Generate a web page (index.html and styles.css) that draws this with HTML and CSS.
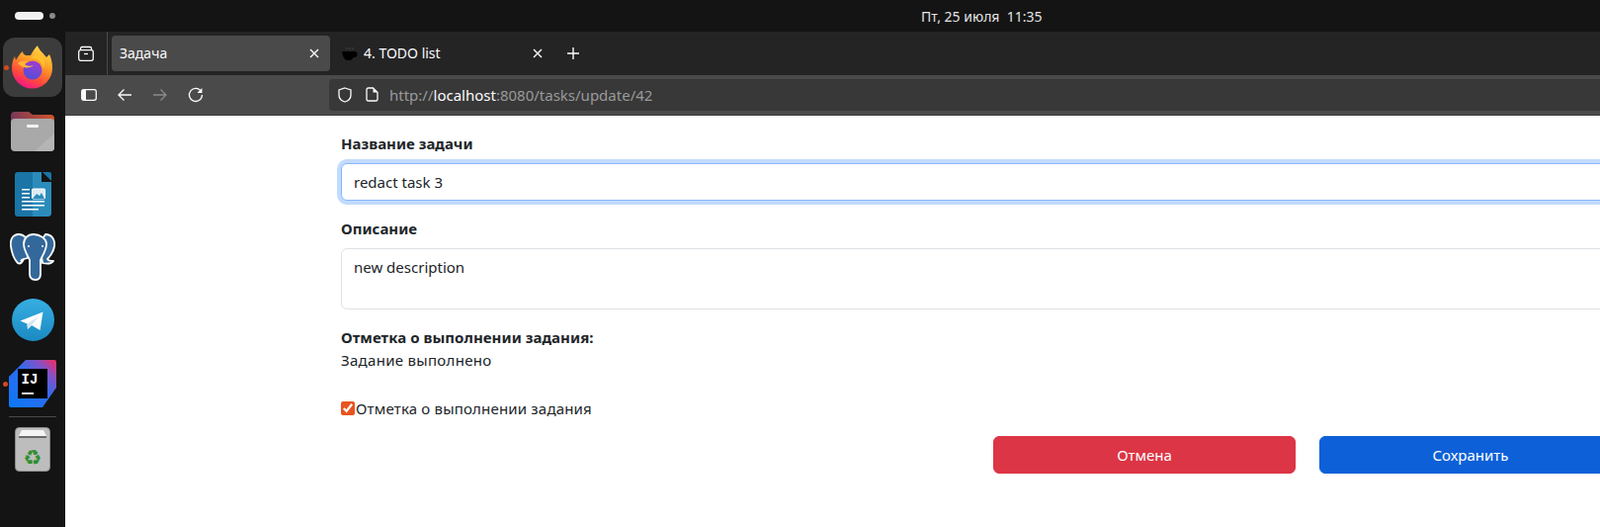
FILE: index.html
```html
<!DOCTYPE html>
<html lang="en">
    <head>
        <meta charset="UTF-8" />
        <meta name="viewport" content="width=device-width, initial-scale=1.0" />
        <title>Задача</title>
        <link rel="stylesheet" href="styles.css">
    </head>
    <body>
        <div class="topbar">
            <div class="workspaces"><span class="pill"></span><span class="dot"></span></div>
            <div class="clock">Пт, 25 июля&nbsp;&nbsp;11:35</div>
        </div>
        <div class="desktop">
            <!-- dock -->
            <aside class="dock">
                <div class="dock-item tile">
                    <span class="running"></span>
                    <svg width="46" height="46" viewBox="0 0 46 46">
                        <defs>
                            <linearGradient id="ffBody" x1="0.8" y1="0" x2="0.35" y2="1">
                                <stop offset="0" stop-color="#ffe34d"/>
                                <stop offset="0.4" stop-color="#ff9f26"/>
                                <stop offset="0.75" stop-color="#ff4a3a"/>
                                <stop offset="1" stop-color="#f5158a"/>
                            </linearGradient>
                            <linearGradient id="ffGlobe" x1="0.7" y1="0" x2="0.3" y2="1">
                                <stop offset="0" stop-color="#a43bd0"/>
                                <stop offset="1" stop-color="#4b50d8"/>
                            </linearGradient>
                        </defs>
                        <path d="M28 1C29 5 33 8 37 13L40 10C42 14 43 19 43 24A20.500 20.500 0 0 1 2 24C2 19 3 15 5 12L6 16C8 13 10 9 13 7C13 9 14 10 16 11L21 11C23 7 25 4 28 1Z" fill="url(#ffBody)"/>
                        <circle cx="23" cy="26" r="9.500" fill="url(#ffGlobe)"/>
                        <path d="M21 14C27 13 33 17 34 24C36 20 35 15 32 11C28 10 24 11 21 14Z" fill="#ffc22e"/>
                        <path d="M8 19C11 16 15 16 19 17C17 18 15 19 15 20C17 22 21 22 24 21C21 24 13 25 8 19Z" fill="#ffb43a"/>
                    </svg>
                </div>
                <div class="dock-item item-files">
                    <svg width="44" height="43" viewBox="0 0 44 43">
                        <defs>
                            <linearGradient id="folderTop" x1="0" y1="0" x2="1" y2="0">
                                <stop offset="0" stop-color="#7a3758"/>
                                <stop offset="1" stop-color="#d2552a"/>
                            </linearGradient>
                        </defs>
                        <path d="M0 6a4 4 0 0 1 4-4h14l4 3h18a4 4 0 0 1 4 4v14H0z" fill="url(#folderTop)"/>
                        <rect x="0" y="9" width="44" height="33" rx="4" fill="#a9a9a9"/>
                        <path d="M44 24v14a4 4 0 0 1-4 4H24z" fill="#b5b5b5"/>
                        <rect x="16" y="15" width="12" height="3" rx="1" fill="#f2f2f2"/>
                    </svg>
                </div>
                <div class="dock-item item-writer">
                    <svg width="37" height="45" viewBox="0 0 37 45">
                        <path d="M3 0h24v10h10v31a4 4 0 0 1-4 4H3a3 3 0 0 1-3-3V3a3 3 0 0 1 3-3z" fill="#1b75a6"/>
                        <path d="M18 0h9v10h10v31a4 4 0 0 1-4 4H18z" fill="#2b8cbc"/>
                        <path d="M28 0l9 9V2a2 2 0 0 0-2-2z" fill="#1b75a6"/>
                        <rect x="7" y="17" width="8" height="1.500" fill="#fff"/>
                        <rect x="7" y="21" width="8" height="1.500" fill="#fff"/>
                        <rect x="7" y="25" width="8" height="1.500" fill="#fff"/>
                        <rect x="7" y="29" width="23" height="1.500" fill="#fff"/>
                        <rect x="7" y="33" width="23" height="1.500" fill="#fff"/>
                        <rect x="7" y="37" width="17" height="1.500" fill="#fff"/>
                        <rect x="17.500" y="17" width="13" height="10" rx="1" fill="#dcecf5" stroke="#fff"/>
                        <path d="M18 27l4-5 3 2 2-3 3 6z" fill="#2b8cbc"/>
                    </svg>
                </div>
                <div class="dock-item item-pg">
                    <svg width="46" height="48" viewBox="0 0 46 48">
                        <g fill="#33689b" stroke="#fff" stroke-width="1.800" stroke-linejoin="round">
                            <path d="M9 1C3 1 0 6 1 13C2 20 5 27 8 30C11 32 13 28 14 26L18 25L17 5C14 2 12 1 9 1Z"/>
                            <path d="M36 1C42 1 46 6 45 13C44 19 41 23 38 26C39 28 41 28 44 28C42 31 37 31 33 30L30 10Z"/>
                            <path d="M24 1C18 1 14 5 14 11C14 17 18 22 20 27L20 41C20 46 23 47 26 47C29 47 31 45 31 41L31 27C33 22 37 17 37 11C37 5 30 1 24 1Z"/>
                        </g>
                        <path d="M14 26C11 27 10 28 13 28" fill="none" stroke="#fff" stroke-width="1.500"/>
                        <circle cx="19" cy="13" r="1" fill="#fff"/>
                        <circle cx="33" cy="13" r="1" fill="#fff"/>
                    </svg>
                </div>
                <div class="dock-item item-tg">
                    <svg width="43" height="43" viewBox="0 0 43 43">
                        <defs>
                            <linearGradient id="tgBg" x1="0.500" y1="0" x2="0.500" y2="1">
                                <stop offset="0" stop-color="#37aee2"/>
                                <stop offset="1" stop-color="#1b8ac2"/>
                            </linearGradient>
                        </defs>
                        <circle cx="21.500" cy="21.500" r="21.500" fill="url(#tgBg)"/>
                        <path d="M8.500 22.500L31.500 13.500L28.500 32L20 27L16 31L15.500 25.500Z" fill="#fff"/>
                        <path d="M15.500 25.500L16 31L20 27L27 18Z" fill="#d3e7f3"/>
                    </svg>
                </div>
                <div class="dock-item item-ij">
                    <span class="running"></span>
                    <svg width="48" height="48" viewBox="0 0 48 48">
                        <defs>
                            <linearGradient id="ijBg" x1="0" y1="1" x2="1" y2="0">
                                <stop offset="0" stop-color="#0a78f5"/>
                                <stop offset="0.55" stop-color="#2f6cf0"/>
                                <stop offset="0.8" stop-color="#8a4fc0"/>
                                <stop offset="1" stop-color="#fe2857"/>
                            </linearGradient>
                        </defs>
                        <path d="M17 0h29a2 2 0 0 1 2 2v26L34 48H2a2 2 0 0 1-2-2V17z" fill="url(#ijBg)"/>
                        <rect x="9" y="9" width="30" height="30" fill="#000"/>
                        <text x="12.500" y="24" class="ij-text">IJ</text>
                        <rect x="13" y="33" width="12" height="1.800" fill="#fff"/>
                    </svg>
                </div>
                <div class="dock-sep"></div>
                <div class="dock-item item-trash">
                    <svg width="36" height="45" viewBox="0 0 36 45">
                        <rect x="0.500" y="0.500" width="35" height="44" rx="4" fill="#bdbdbd" stroke="#8a8a8a"/>
                        <path d="M4 9l3-6h22l3 6z" fill="#f4f4f4"/>
                        <rect x="4" y="9" width="28" height="2" fill="#6b6b6b"/>
                        <text x="18" y="38" class="recycle">♻</text>
                    </svg>
                </div>
            </aside>

            <div class="browser">
                <div class="tabbar">
                    <div class="tabs-btn">
                        <svg width="16" height="16" viewBox="0 0 16 16" fill="none" stroke="#fbfbfe" stroke-width="1.300">
                            <rect x="0.700" y="4.700" width="14.600" height="10.600" rx="2"/>
                            <path d="M2.500 4.500V3a1.500 1.500 0 0 1 1.500-1.500h8A1.500 1.500 0 0 1 13.500 3v1.500"/>
                            <path d="M6 8.500h4"/>
                        </svg>
                    </div>
                    <div class="tab active">
                        <span class="tab-title">Задача</span>
                        <svg class="tab-close" width="10" height="10" viewBox="0 0 10 10" stroke="#fbfbfe" stroke-width="1.400"><path d="M1 1l8 8M9 1l-8 8"/></svg>
                    </div>
                    <div class="tab">
                        <svg class="favicon" width="16" height="16" viewBox="0 0 16 16">
                            <path d="M0 6h12.500a3 3 0 0 1 0 6h-1c-1 2-2 3-4 3h-2C3 15 1 12 0 6z" fill="#000"/>
                            <path d="M5 2v2M8 2v2M11 2v2" stroke="#444" stroke-width="1"/>
                        </svg>
                        <span class="tab-title">4. TODO list</span>
                        <svg class="tab-close" width="10" height="10" viewBox="0 0 10 10" stroke="#fbfbfe" stroke-width="1.400"><path d="M1 1l8 8M9 1l-8 8"/></svg>
                    </div>
                    <svg class="new-tab" width="12" height="12" viewBox="0 0 12 12" stroke="#fbfbfe" stroke-width="1.400"><path d="M6 0v12M0 6h12"/></svg>
                </div>
                <div class="navbar">
                    <div class="nav-btns">
                        <svg width="16" height="14" viewBox="0 0 16 14" fill="none" stroke="#fbfbfe" stroke-width="1.300">
                            <rect x="0.700" y="1.700" width="14.600" height="10.600" rx="2"/>
                            <rect x="1" y="2" width="4" height="10" fill="#fbfbfe" stroke="none"/>
                        </svg>
                        <svg width="16" height="14" viewBox="0 0 16 14" fill="none" stroke="#fbfbfe" stroke-width="1.300"><path d="M15 7H2M7.500 1.500L2 7l5.500 5.500"/></svg>
                        <svg width="16" height="14" viewBox="0 0 16 14" fill="none" stroke="#8a8a8a" stroke-width="1.300"><path d="M1 7h13M8.500 1.500L14 7l-5.500 5.500"/></svg>
                        <svg width="16" height="16" viewBox="0 0 16 16" fill="none" stroke="#fbfbfe" stroke-width="1.300"><path d="M13.500 4.500A6.500 6.500 0 1 0 14.500 8"/><path d="M14.500 1v5h-5z" fill="#fbfbfe" stroke="none"/></svg>
                    </div>
                    <div class="urlbar">
                        <svg width="16" height="16" viewBox="0 0 16 16" fill="none" stroke="#fbfbfe" stroke-width="1.300"><path d="M8 1l6 2v5c0 3.500-2.500 6-6 7-3.500-1-6-3.500-6-7V3z"/></svg>
                        <svg class="page-icon" width="13" height="15" viewBox="0 0 13 15" fill="none" stroke="#fbfbfe" stroke-width="1.300"><path d="M2.500 1h5L12 5.500V12.500a1.500 1.500 0 0 1-1.500 1.500h-8A1.500 1.500 0 0 1 1 12.500v-10A1.500 1.500 0 0 1 2.500 1z"/><path d="M7.500 1v4.500H12" fill="#fbfbfe" stroke="none"/></svg>
                        <span class="url">http://<b>localhost</b>:8080/tasks/update/42</span>
                    </div>
                </div>
                <main class="page">
                    <form class="container">
                        <div class="field">
                            <label class="form-label" for="title">Название задачи</label>
                            <input class="form-control focus" id="title" type="text" value="redact task 3">
                        </div>
                        <div class="field">
                            <label class="form-label" for="desc">Описание</label>
                            <textarea class="form-control" id="desc" rows="2">new description</textarea>
                        </div>
                        <div class="status">
                            <div class="status-title">Отметка о выполнении задания:</div>
                            <div class="status-value">Задание выполнено</div>
                        </div>
                        <label class="check"><input type="checkbox" checked>Отметка о выполнении задания</label>
                        <div class="actions">
                            <button type="button" class="btn btn-cancel">Отмена</button>
                            <button type="button" class="btn btn-save">Сохранить</button>
                        </div>
                    </form>
                </main>
            </div>
        </div>
    </body>
</html>
```

FILE: styles.css
```css
* {
    padding: 0;
    margin: 0;
    box-sizing: border-box;
}
html, body {
    width: 1619px;
    height: 533px;
    overflow: hidden;
}
body {
    background-color: #141414;
    font-family: "Noto Sans", sans-serif;
    font-size: 15px;
    color: #212529;
}

/* top panel */
.topbar {
    height: 32px;
    display: flex;
    align-items: center;
    padding-left: 15px;
    background-color: #141414;
}
.workspaces {
    display: flex;
    align-items: center;
    gap: 6px;
}
.pill {
    width: 29px;
    height: 8px;
    border-radius: 4px;
    background-color: #f2f2f2;
}
.dot {
    width: 6px;
    height: 6px;
    border-radius: 50%;
    background-color: #8a8a8a;
}
.clock {
    margin-left: 876px;
    font-size: 14px;
    color: #e4e4e4;
}

.desktop {
    display: flex;
    height: 501px;
}

/* dock */
.dock {
    flex: none;
    width: 66px;
    display: flex;
    flex-direction: column;
    align-items: center;
    padding-top: 6px;
}
.dock-item {
    position: relative;
    display: flex;
    justify-content: center;
    align-items: center;
}
.tile {
    width: 60px;
    height: 60px;
    border-radius: 12px;
    background-color: #3c3c3c;
}
.running {
    position: absolute;
    left: 1px;
    top: 28px;
    width: 5px;
    height: 5px;
    border-radius: 50%;
    background-color: #d9481c;
}
.item-files { margin-top: 13px; }
.item-writer { margin-top: 20px; }
.item-pg { margin-top: 17px; }
.item-tg { margin-top: 18px; }
.item-ij { margin-top: 19px; width: 66px; }
.item-ij .running { left: 3px; top: 22px; }
.item-trash { margin-top: 10px; }
.dock-sep {
    width: 48px;
    height: 1px;
    margin-top: 9px;
    background-color: #4a4a4a;
}
.ij-text {
    font-family: "Liberation Mono", monospace;
    font-size: 14px;
    font-weight: 700;
    fill: #fff;
}
.recycle {
    font-family: "DejaVu Sans", sans-serif;
    font-size: 21px;
    text-anchor: middle;
    fill: #2f8f2f;
}

/* browser */
.browser {
    flex: none;
    width: 1854px;
    display: flex;
    flex-direction: column;
    background-color: #fff;
}
.tabbar {
    height: 44px;
    display: flex;
    align-items: center;
    background-color: #242424;
}
.tabs-btn {
    width: 43px;
    height: 44px;
    display: flex;
    justify-content: center;
    align-items: center;
    padding-right: 1px;
    border-right: 1px solid #4a4a4a;
}
.tab {
    width: 221px;
    height: 36px;
    display: flex;
    align-items: center;
    margin-left: 4px;
    padding: 0 11px 0 8px;
    border-radius: 4px;
    font-size: 14px;
    color: #fbfbfe;
}
.tab + .tab {
    padding-left: 12px;
    margin-left: 0;
    width: 226px;
}
.tab.active {
    background-color: #4a4a4a;
}
.tab-title {
    flex: 1;
    padding-bottom: 2px;
}
.favicon {
    margin-right: 6px;
}
.new-tab {
    margin-left: 14px;
}
.navbar {
    height: 41px;
    display: flex;
    align-items: center;
    padding: 0 0 1px 0;
    background-color: #4a4a4a;
    border-bottom: 1px solid #3a3a3a;
}
.nav-btns {
    width: 267px;
    display: flex;
    align-items: center;
    gap: 20px;
    padding-left: 16px;
}
.urlbar {
    flex: 1;
    height: 32px;
    display: flex;
    align-items: center;
    padding-left: 8px;
    border-radius: 4px;
    background-color: #383838;
}
.page-icon {
    margin-left: 13px;
}
.url {
    margin-left: 11px;
    font-size: 15px;
    color: #9a9a9a;
}
.url b {
    font-weight: 400;
    color: #fbfbfe;
}

/* form */
.page {
    flex: 1;
    padding-top: 16px;
    background-color: #fff;
}
.container {
    width: 1320px;
    margin: 0 auto;
    padding: 0 12px;
    line-height: 24px;
}
.field {
    margin-bottom: 16px;
}
.form-label {
    display: block;
    margin-bottom: 8px;
    font-weight: 700;
}
.form-control {
    display: block;
    width: 100%;
    padding: 6px 12px;
    font: inherit;
    color: #212529;
    line-height: 24px;
    background-color: #fff;
    border: 1px solid #dee2e6;
    border-radius: 6px;
    resize: none;
    outline: none;
}
.form-control.focus {
    border-color: #86b7fe;
    box-shadow: 0 0 0 4px #c2dbfe;
}
.status {
    margin-top: 16px;
}
.status-title {
    font-weight: 700;
    letter-spacing: 0.05px;
}
.status-value {
    margin-top: -1px;
    letter-spacing: 0.3px;
}
.check {
    display: flex;
    align-items: center;
    margin-top: 25px;
    letter-spacing: 0.18px;
}
.check input {
    width: 14px;
    height: 14px;
    margin-right: 1px;
    accent-color: #e95420;
}
.actions {
    display: flex;
    justify-content: flex-end;
    gap: 24px;
    margin-top: 16px;
}
.btn {
    all: unset;
    width: 306px;
    height: 38px;
    box-sizing: border-box;
    text-align: center;
    line-height: 36px;
    border-radius: 6px;
    color: #fff;
}
.btn-cancel {
    background-color: #dc3545;
    border: 1px solid #dc3545;
}
.btn-save {
    background-color: #0d60d8;
    border: 1px solid #0d60d8;
}
```
